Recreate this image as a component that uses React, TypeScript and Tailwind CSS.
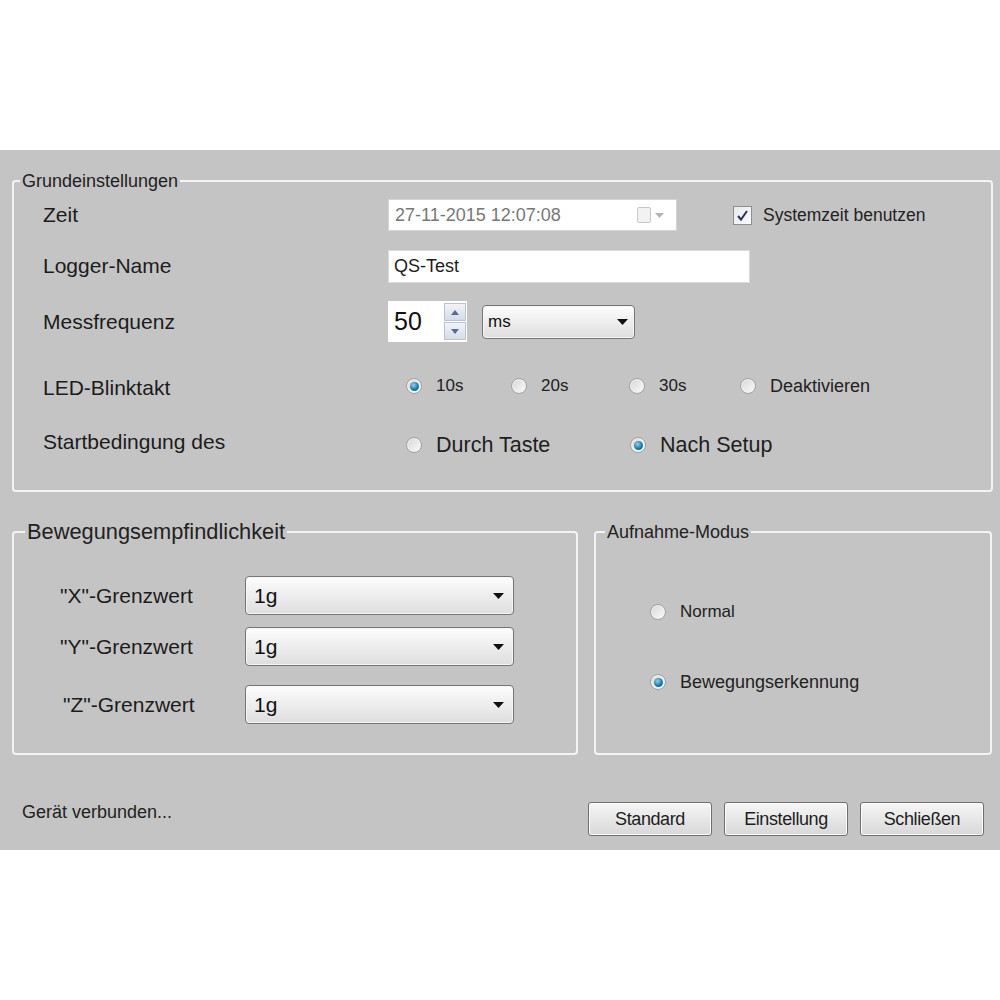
import React from 'react';

const font = "font-['Liberation_Sans',Arial,sans-serif]";

function Group({ title, titleClass, className, children }: { title: string; titleClass: string; className: string; children: React.ReactNode }) {
  return (
    <div className={`relative rounded-[4px] border-2 border-[#f4f4f4] ${className}`}>
      <span className={`absolute bg-[#c4c4c4] px-[2px] leading-none text-[#222] ${titleClass}`}>{title}</span>
      {children}
    </div>
  );
}

function Radio({ on }: { on?: boolean }) {
  return (
    <div className="flex h-[16px] w-[16px] shrink-0 items-center justify-center rounded-full border border-[#a2a2a2] bg-gradient-to-br from-[#d6d6d6] to-[#fbfbfb] shadow-[inset_0_0_0_1px_#f2f2f2]">
      {on && <div className="h-[9px] w-[9px] rounded-full bg-[radial-gradient(circle_at_40%_35%,#8fd6f2,#1f7aa3_55%,#0c4a6a)]" />}
    </div>
  );
}

function RadioItem({ on, label, w, text }: { on?: boolean; label: string; w: string; text: string }) {
  return (
    <div className={`flex items-center gap-[14px] ${w}`}>
      <Radio on={on} />
      <span className={text}>{label}</span>
    </div>
  );
}

function Arrow() {
  return (
    <svg width="11" height="6" viewBox="0 0 11 6">
      <path d="M0 0h11L5.5 6z" fill="#111" />
    </svg>
  );
}

function Combo({ value, className, text }: { value: string; className: string; text: string }) {
  return (
    <div className={`flex items-center justify-between rounded-[4px] border border-[#767676] bg-gradient-to-b from-[#fdfdfd] to-[#dedede] shadow-[inset_0_0_0_1px_#f6f6f6] ${className}`}>
      <span className={text}>{value}</span>
      <Arrow />
    </div>
  );
}

function Btn({ label }: { label: string }) {
  return (
    <div className="flex h-[34px] w-[124px] items-center justify-center rounded-[3px] border border-[#707070] bg-gradient-to-b from-[#f6f6f6] to-[#d8d8d8] text-[18px] tracking-[-0.4px] text-[#1e1e1e] shadow-[inset_0_0_0_1px_#fbfbfb]">
      {label}
    </div>
  );
}

export default function App() {
  const label = 'w-[345px] shrink-0 text-[21px] text-[#1c1c1c]';
  const small = 'text-[17px] text-[#222]';
  return (
    <div className={`min-h-[1000px] w-[1000px] bg-white ${font}`}>
      <div className="h-[150px]" />
      <div className="h-[700px] bg-[#c4c4c4] pt-[30px]">
        <Group
          title="Grundeinstellungen"
          titleClass="left-[6px] top-[-10px] text-[18px]"
          className="ml-[12px] h-[312px] w-[981px]"
        >
          <div className="pl-[29px] pt-[15px]">
            <div className="flex h-[36px] items-center">
              <span className={label}>Zeit</span>
              <div className="flex h-[32px] w-[289px] items-center justify-between border border-[#d4d4d4] bg-white pl-[6px] pr-[12px]">
                <span className="text-[18px] text-[#777]">27-11-2015 12:07:08</span>
                <div className="flex items-center gap-[4px]">
                  <div className="h-[16px] w-[14px] rounded-[2px] border border-[#c8c8c8] bg-[#f2f2f2]" />
                  <svg width="9" height="5" viewBox="0 0 9 5">
                    <path d="M0 0h9L4.5 5z" fill="#b4b4b4" />
                  </svg>
                </div>
              </div>
              <div className="ml-[56px] flex h-[19px] w-[19px] items-center justify-center border border-[#8e8e8e] bg-gradient-to-br from-[#e6e9f0] to-[#fafafa]">
                <svg width="13" height="13" viewBox="0 0 13 13">
                  <path d="M2 7l3 3.5L11 2" fill="none" stroke="#2a3358" strokeWidth="2" />
                </svg>
              </div>
              <span className="ml-[11px] text-[17.5px] text-[#222]">Systemzeit benutzen</span>
            </div>

            <div className="mt-[15px] flex h-[36px] items-center">
              <span className={label}>Logger-Name</span>
              <div className="flex h-[33px] w-[362px] items-center border border-[#dadada] bg-white pl-[5px]">
                <span className="text-[18px] text-[#1e1e1e]">QS-Test</span>
              </div>
            </div>

            <div className="mt-[16px] flex h-[43px] items-center">
              <span className={label}>Messfrequenz</span>
              <div className="flex h-[41px] w-[79px] items-center justify-between bg-white pl-[6px] pr-[1px]">
                <span className="text-[25px] text-[#111]">50</span>
                <div className="flex flex-col gap-[1px]">
                  {['M0 5L4 0l4 5z', 'M0 0h8L4 5z'].map((d) => (
                    <div key={d} className="flex h-[18px] w-[22px] items-center justify-center border border-[#bcc4d2] bg-gradient-to-b from-[#f0f3f8] to-[#d6dce8]">
                      <svg width="8" height="5" viewBox="0 0 8 5">
                        <path d={d} fill="#5b6a92" />
                      </svg>
                    </div>
                  ))}
                </div>
              </div>
              <Combo value="ms" className="ml-[15px] h-[34px] w-[153px] pl-[5px] pr-[6px]" text="text-[17px] text-[#111]" />
            </div>

            <div className="mt-[25px] flex h-[36px] items-center">
              <span className={`${label} translate-y-[2px]`}>LED-Blinktakt</span>
              <div className="flex items-center pl-[18px]">
                <RadioItem on label="10s" w="w-[105px]" text={small} />
                <RadioItem label="20s" w="w-[118px]" text={small} />
                <RadioItem label="30s" w="w-[111px]" text={small} />
                <RadioItem label="Deaktivieren" w="w-[150px]" text="text-[18px] text-[#222]" />
              </div>
            </div>

            <div className="mt-[23px] flex h-[36px] items-center">
              <span className={`${label} -translate-y-[3px]`}>Startbedingung des</span>
              <div className="flex items-center pl-[18px]">
                <RadioItem label="Durch Taste" w="w-[224px]" text="text-[21.5px] text-[#1e1e1e]" />
                <RadioItem on label="Nach Setup" w="w-[200px]" text="text-[21.5px] text-[#1e1e1e]" />
              </div>
            </div>
          </div>
        </Group>

        <div className="ml-[12px] mt-[39px] flex gap-[16px]">
          <Group
            title="Bewegungsempfindlichkeit"
            titleClass="left-[11px] top-[-12px] text-[21.8px]"
            className="h-[224px] w-[566px]"
          >
            <div className="pl-[46px] pt-[43px]">
              {[
                { l: '"X"-Grenzwert', mt: '', pl: '' },
                { l: '"Y"-Grenzwert', mt: 'mt-[12px]', pl: '' },
                { l: '"Z"-Grenzwert', mt: 'mt-[19px]', pl: 'pl-[3px]' },
              ].map((r) => (
                <div key={r.l} className={`flex h-[39px] items-center ${r.mt}`}>
                  <span className={`w-[185px] shrink-0 text-[21px] text-[#1c1c1c] ${r.pl}`}>{r.l}</span>
                  <Combo value="1g" className="h-[39px] w-[269px] pl-[8px] pr-[9px]" text="text-[21px] text-[#111]" />
                </div>
              ))}
            </div>
          </Group>

          <Group
            title="Aufnahme-Modus"
            titleClass="left-[9px] top-[-10px] text-[18px]"
            className="h-[224px] w-[398px]"
          >
            <div className="pl-[54px] pt-[67px]">
              <div className="flex h-[24px] items-center">
                <RadioItem label="Normal" w="" text="text-[17px] text-[#222]" />
              </div>
              <div className="mt-[46px] flex h-[24px] items-center">
                <RadioItem on label="Bewegungserkennung" w="" text="text-[18px] text-[#222]" />
              </div>
            </div>
          </Group>
        </div>

        <div className="mt-[47px] flex items-start justify-between pl-[22px] pr-[16px]">
          <span className="text-[18px] leading-[20px] text-[#222]">Gerät verbunden...</span>
          <div className="flex gap-[12px]">
            <Btn label="Standard" />
            <Btn label="Einstellung" />
            <Btn label="Schließen" />
          </div>
        </div>
      </div>
    </div>
  );
}
